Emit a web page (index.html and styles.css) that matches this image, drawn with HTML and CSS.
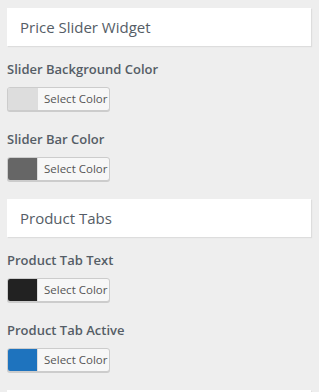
FILE: index.html
```html
<!DOCTYPE html>
<html lang="en">
<head>
  <meta charset="UTF-8">
  <meta name="viewport" content="width=device-width, initial-scale=1.0">
  <title>Customizer</title>
  <link rel="stylesheet" href="styles.css">
</head>
<body>
  <div class="panel">
    <h3 class="section-title">Price Slider Widget</h3>
    <div class="control">
      <span class="control-label">Slider Background Color</span>
      <button class="color-btn"><span class="swatch swatch-light"></span><span class="btn-text">Select Color</span></button>
    </div>
    <div class="control">
      <span class="control-label">Slider Bar Color</span>
      <button class="color-btn"><span class="swatch swatch-grey"></span><span class="btn-text">Select Color</span></button>
    </div>

    <h3 class="section-title">Product Tabs</h3>
    <div class="control">
      <span class="control-label">Product Tab Text</span>
      <button class="color-btn"><span class="swatch swatch-dark"></span><span class="btn-text">Select Color</span></button>
    </div>
    <div class="control">
      <span class="control-label">Product Tab Active</span>
      <button class="color-btn"><span class="swatch swatch-blue"></span><span class="btn-text">Select Color</span></button>
    </div>

    <h3 class="section-title section-cut"></h3>
  </div>
</body>
</html>
```

FILE: styles.css
```css
* {
  margin: 0;
  padding: 0;
  box-sizing: border-box;
}
html, body {
  height: 100%;
  overflow: hidden;
}
body {
  background: #eee;
  font-family: "Open Sans", "Noto Sans", sans-serif;
  color: #555d66;
}
.panel {
  display: flex;
  flex-direction: column;
  padding: 8px 8px 0 7px;
}
.section-title {
  height: 38px;
  padding: 0 13px;
  background: #fff;
  box-shadow: 1px 1px 1px #ddd;
  font-size: 15px;
  font-weight: 400;
  line-height: 38px;
  color: #555d66;
  margin-bottom: 13px;
}
.section-cut {
  height: 3px;
  margin-bottom: 0;
}
.control {
  display: flex;
  flex-direction: column;
  align-items: flex-start;
  gap: 8px;
  margin-bottom: 18px;
}
.control-label {
  font-size: 13px;
  font-weight: 600;
  line-height: 20px;
}
.color-btn {
  display: flex;
  height: 24px;
  border: 1px solid #ccc;
  border-radius: 3px;
  background: #f7f7f7;
  box-shadow: 0 1px 0 #ccc;
  overflow: hidden;
  font-family: inherit;
  cursor: pointer;
}
.swatch {
  width: 30px;
  height: 100%;
  border-right: 1px solid #ddd;
}
.swatch-light { background: #ddd; }
.swatch-grey { background: #666; }
.swatch-dark { background: #222; }
.swatch-blue { background: #1e73be; }
.btn-text {
  padding: 0 2px 0 6px;
  font-size: 11.5px;
  line-height: 22px;
  color: #555;
}
```
